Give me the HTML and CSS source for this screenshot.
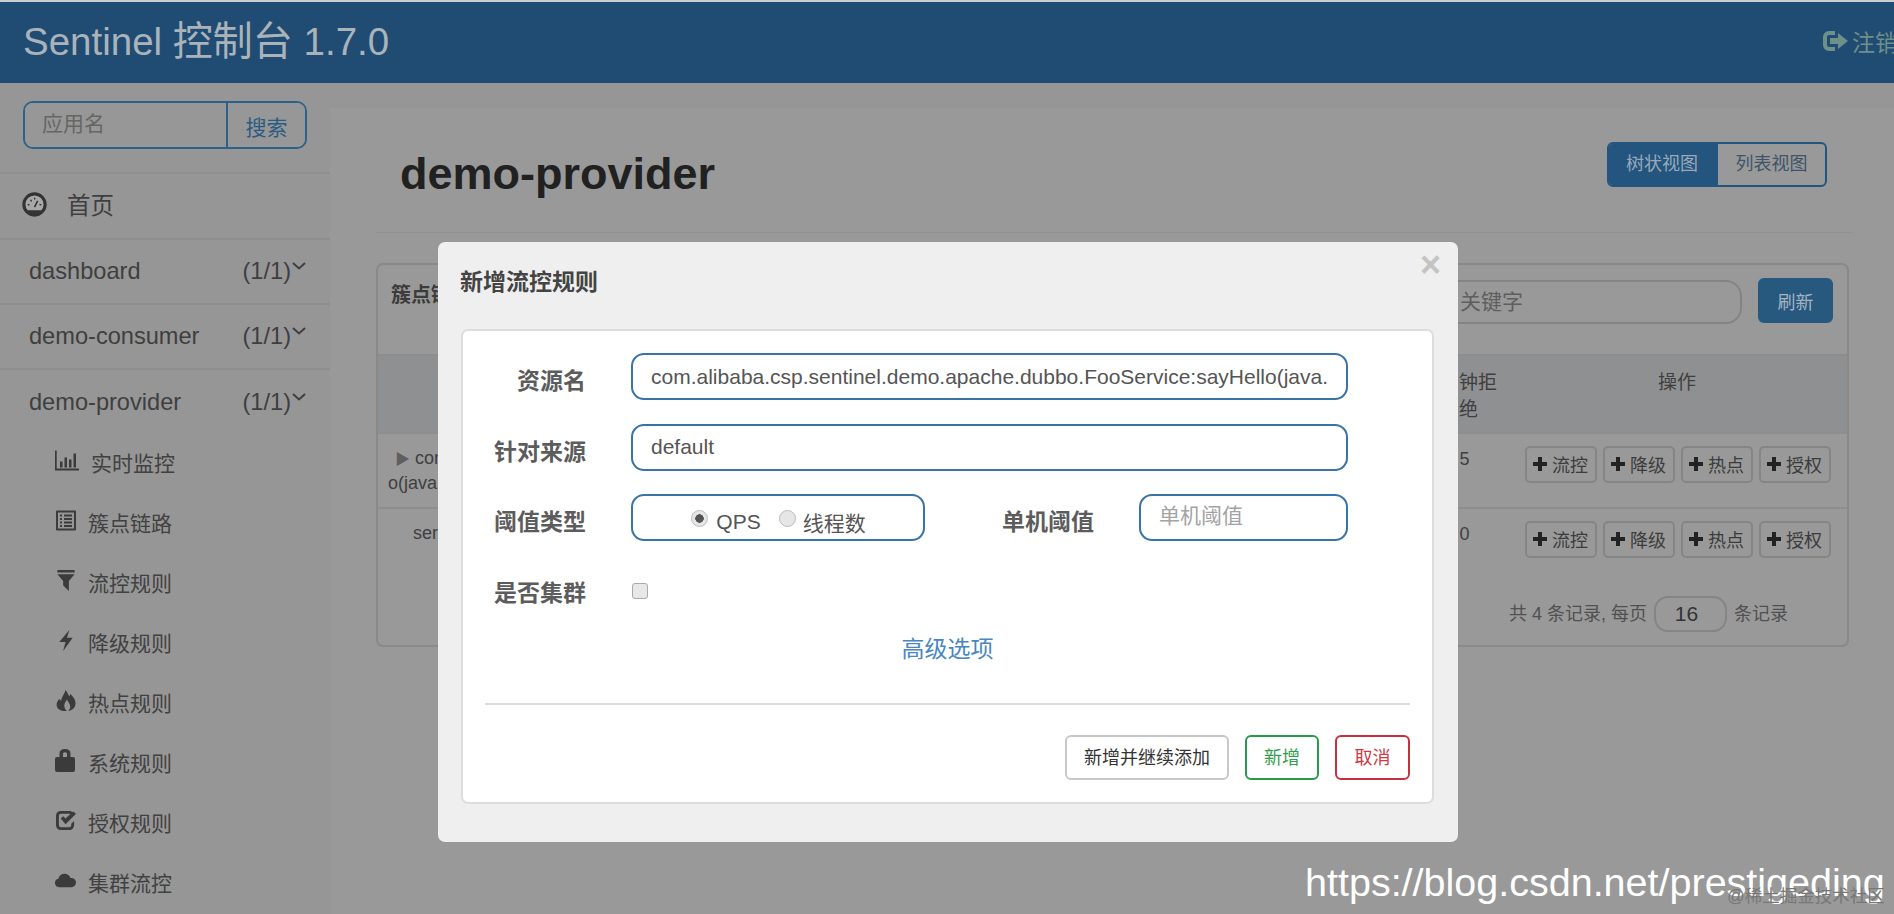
FILE: index.html
```html
<!DOCTYPE html>
<html lang="zh-CN">
<head>
<meta charset="utf-8">
<title>Sentinel 控制台 1.7.0</title>
<link rel="stylesheet" href="styles.css">
</head>
<body>
<svg class="defs" width="0" height="0" aria-hidden="true">
  <symbol id="i-plus" viewBox="0 0 14 14"><path d="M5 0h4v5h5v4H9v5H5V9H0V5h5z"/></symbol>
  <symbol id="i-chev" viewBox="0 0 14 8"><path d="M1 1l6 5.500L13 1" fill="none" stroke="currentColor" stroke-width="2"/></symbol>
</svg>
<header class="topbar">
  <div class="brand">Sentinel <span class="brand-cjk">控制台</span> 1.7.0</div>
  <div class="logout">
    <svg class="logout-icon" viewBox="0 0 25 20"><path d="M12 0H6a6 6 0 0 0-6 6v8a6 6 0 0 0 6 6h6v-4H6a2 2 0 0 1-2-2V6a2 2 0 0 1 2-2h6z"/><path d="M7 7h8V2l10 8-10 8v-5H7z"/></svg>
    <span>注销</span>
  </div>
</header>
<div class="layout">
  <aside class="sidebar">
    <div class="search-wrap">
      <div class="search">
        <input class="search-input" type="text" placeholder="应用名">
        <button class="search-btn" type="button">搜索</button>
      </div>
    </div>
    <div class="home">
      <svg class="home-icon" viewBox="0 0 24 24"><circle cx="12" cy="12" r="10.200" fill="#a8a8a8" stroke="#333" stroke-width="3"/><path d="M4.500 17.500h15a9.500 9.500 0 0 1-15 0z" fill="#333"/><path d="M12 14.500l3-6" stroke="#333" stroke-width="1.500"/><path d="M5.500 11.500h1.700v1.500H5.500zM8 7.500h1.500v1.500H8zM11.500 5.500h1.300v1.700h-1.300zM16.800 11.500h1.700v1.500h-1.700z" fill="#333"/></svg>
      <span>首页</span>
    </div>
    <div class="app"><span>dashboard</span><span class="count">(1/1)<svg class="chev"><use href="#i-chev"/></svg></span></div>
    <div class="app"><span>demo-consumer</span><span class="count">(1/1)<svg class="chev"><use href="#i-chev"/></svg></span></div>
    <div class="app open"><span>demo-provider</span><span class="count">(1/1)<svg class="chev"><use href="#i-chev"/></svg></span></div>
    <nav class="menu">
      <a class="menu-item first">
        <svg class="mi wide" viewBox="0 0 24 20"><path d="M0 0h1.700v18H24v2H0z"/><path d="M5 11h2.500v6H5zM9.500 7H12v10H9.500zM14 9h2.500v8H14zM18.500 3H21v14h-2.500z"/></svg>
        <span>实时监控</span>
      </a>
      <a class="menu-item">
        <svg class="mi" viewBox="0 0 20 20"><path fill-rule="evenodd" d="M1 0h18a1 1 0 0 1 1 1v18a1 1 0 0 1-1 1H1a1 1 0 0 1-1-1V1a1 1 0 0 1 1-1zm1 2v16h16V2z"/><path d="M4 4h2v2H4zM8 4h8v2H8zM4 7.500h2v2H4zM8 7.500h8v2H8zM4 11h2v2H4zM8 11h8v2H8zM4 14.500h2v2H4zM8 14.500h8v2H8z"/></svg>
        <span>簇点链路</span>
      </a>
      <a class="menu-item">
        <svg class="mi" viewBox="0 0 20 22"><path d="M1 0h18v2.500H1zM1 4.500h18l-6 7v10.500l-3-3-3-3v-4.500z"/></svg>
        <span>流控规则</span>
      </a>
      <a class="menu-item">
        <svg class="mi" viewBox="0 0 20 22"><path d="M13.500 0L11 8h6L7 22l2.500-9.500H3z"/></svg>
        <span>降级规则</span>
      </a>
      <a class="menu-item">
        <svg class="mi" viewBox="0 0 20 22"><path fill-rule="evenodd" d="M9.500 0c2.500 2.500 2 4.500 4 6.500.7-.8.8-1.500.8-2.500 3.400 3 5.700 6.500 5.700 10 0 4.500-3.500 8-8 8 2-1.500 3-3.500 2-6.500-.6-2-2-3.200-3-5.500-1.500 2.500-2.800 4-2.800 6.500 0 2.400 1.300 4 2.800 5.500C5.500 22 2.500 21 1 18.500-.8 15.300.5 12 3 9.500c1 1.200 1.500 1.500 2 2C5 7.500 8.500 4.500 9.500 0z"/></svg>
        <span>热点规则</span>
      </a>
      <a class="menu-item">
        <svg class="mi lock" viewBox="0 0 20 23"><path fill-rule="evenodd" d="M4.500 8V4.500C4.500 1.500 6.500 0 10 0s5.500 1.500 5.500 4.500V8H18a2 2 0 0 1 2 2v11a2 2 0 0 1-2 2H2a2 2 0 0 1-2-2V10a2 2 0 0 1 2-2zm3.500 0h4V5c0-1-.7-1.700-2-1.700S8 4 8 5z"/></svg>
        <span>系统规则</span>
      </a>
      <a class="menu-item">
        <svg class="mi" viewBox="0 0 21 20"><path d="M14 0H5a5 5 0 0 0-5 5v10a5 5 0 0 0 5 5h9a5 5 0 0 0 5-5v-4.500l-3 3V15a2 2 0 0 1-2 2H5a2 2 0 0 1-2-2V5a2 2 0 0 1 2-2h9c.5 0 1 .2 1.400.5L17.500 1.300A5 5 0 0 0 14 0z"/><path d="M5 8l2.500-2.500L10 8l8-7.500L21 3 10 14z"/></svg>
        <span>授权规则</span>
      </a>
      <a class="menu-item">
        <svg class="mi wide" viewBox="0 0 22 14"><path d="M4.500 14a4.500 4.500 0 0 1-1-8.900C4.300 2 7 0 10 0c3 0 5.400 1.800 6.200 4.500A4.800 4.800 0 0 1 22 9.200 4.800 4.800 0 0 1 17.200 14z"/></svg>
        <span>集群流控</span>
      </a>
    </nav>
  </aside>

  <main class="content">
    <div class="page-head">
      <h1 class="page-title">demo-provider</h1>
      <div class="toggle">
        <span class="toggle-btn active">树状视图</span>
        <span class="toggle-btn">列表视图</span>
      </div>
    </div>
    <section class="panel">
      <div class="panel-head">
        <b class="panel-title">簇点链路</b>
        <input class="keyword" type="text" placeholder="关键字">
        <button class="refresh" type="button">刷新</button>
      </div>
      <div class="row thead">
        <div class="c-name">资源名</div>
        <div class="c-num">分钟拒绝</div>
        <div class="c-ops">操作</div>
      </div>
      <div class="row">
        <div class="c-name"><span class="tri">▶</span> com.alibaba.csp<br><span class="wrapline">o(java.lang.String)</span></div>
        <div class="c-num val">5</div>
        <div class="c-ops btns">
          <button class="op" type="button"><svg class="plus"><use href="#i-plus"/></svg>流控</button>
          <button class="op" type="button"><svg class="plus"><use href="#i-plus"/></svg>降级</button>
          <button class="op" type="button"><svg class="plus"><use href="#i-plus"/></svg>热点</button>
          <button class="op" type="button"><svg class="plus"><use href="#i-plus"/></svg>授权</button>
        </div>
      </div>
      <div class="row plain">
        <div class="c-name"><span class="svc">service</span></div>
        <div class="c-num val">0</div>
        <div class="c-ops btns">
          <button class="op" type="button"><svg class="plus"><use href="#i-plus"/></svg>流控</button>
          <button class="op" type="button"><svg class="plus"><use href="#i-plus"/></svg>降级</button>
          <button class="op" type="button"><svg class="plus"><use href="#i-plus"/></svg>热点</button>
          <button class="op" type="button"><svg class="plus"><use href="#i-plus"/></svg>授权</button>
        </div>
      </div>
      <div class="pager">
        <span>共 4 条记录, 每页</span>
        <input class="page-size" type="text" value="16">
        <span>条记录</span>
      </div>
    </section>
  </main>
</div>

<div class="modal">
  <div class="modal-head">
    <h4 class="modal-title">新增流控规则</h4>
    <span class="close">×</span>
  </div>
  <div class="modal-panel">
    <div class="form-row">
      <label class="lbl">资源名</label>
      <input class="field full" type="text" value="com.alibaba.csp.sentinel.demo.apache.dubbo.FooService:sayHello(java.">
    </div>
    <div class="form-row">
      <label class="lbl">针对来源</label>
      <input class="field full" type="text" value="default">
    </div>
    <div class="form-row">
      <label class="lbl">阈值类型</label>
      <div class="field radios">
        <span class="radio on"></span><span class="r-text">QPS</span>
        <span class="radio second"></span><span class="r-text">线程数</span>
      </div>
      <label class="lbl lbl-mid">单机阈值</label>
      <input class="field small" type="text" placeholder="单机阈值">
    </div>
    <div class="form-row">
      <label class="lbl">是否集群</label>
      <span class="check"></span>
    </div>
    <div class="advanced">高级选项</div>
    <div class="divider"></div>
    <div class="actions">
      <button class="act wide-act" type="button">新增并继续添加</button>
      <button class="act green" type="button">新增</button>
      <button class="act red" type="button">取消</button>
    </div>
  </div>
</div>

<div class="wm-main">https://blog.csdn.net/prestigeding</div>
<div class="wm-sub">@稀土掘金技术社区</div>
</body>
</html>
```
FILE: styles.css
```css
* { box-sizing: border-box; }
html, body { height: 100%; }
body {
  margin: 0;
  width: 1894px;
  height: 914px;
  overflow: hidden;
  position: relative;
  background: #969696;
  color: #3f3f3f;
  font-family: "Liberation Sans", "Noto Sans CJK SC", sans-serif;
  font-size: 18px;
  display: flex;
  flex-direction: column;
}
button, input { font-family: inherit; outline: none; }
.defs { position: absolute; }

.topbar {
  height: 83px;
  flex: none;
  border-top: 2px solid #c9ced2;
  background: #204c74;
  display: flex;
  align-items: center;
  justify-content: space-between;
  padding-left: 23px;
}
.brand { font-size: 38.500px; color: #abb3ba; margin-top: -9px; }
.brand-cjk { font-size: 40px; }
.logout {
  display: flex;
  align-items: center;
  gap: 4px;
  width: 71px;
  flex: none;
  white-space: nowrap;
  color: #6d9088;
  font-size: 23px;
  margin-top: -3px;
}
.logout-icon { width: 25px; height: 20px; fill: currentColor; flex: none; }

.layout { flex: 1; display: flex; min-height: 0; }

.sidebar { width: 330px; flex: none; }
.search-wrap { height: 89px; padding: 18px 23px 0 23px; }
.search {
  display: flex;
  height: 48px;
  width: 284px;
  border: 2px solid #2c6289;
  border-radius: 10px;
  overflow: hidden;
}
.search-input {
  width: 203px;
  flex: none;
  border: 0;
  border-right: 2px solid #2c6289;
  background: #979797;
  padding: 0 0 2px 17px;
  font-size: 21px;
}
.search-input::placeholder { color: #666; opacity: 1; }
.search-btn {
  flex: 1;
  border: 0;
  background: #979797;
  color: #2b5b84;
  font-size: 21px;
  padding: 2px 0 0;
}
.home {
  height: 66px;
  border-top: 2px solid #8e8e8e;
  display: flex;
  align-items: center;
  padding: 0 0 4px 22px;
  font-size: 23.500px;
  gap: 20px;
  color: #3f3f3f;
}
.home-icon { width: 25px; height: 25px; flex: none; }
.app {
  height: 65px;
  border-top: 2px solid #8e8e8e;
  display: flex;
  align-items: center;
  justify-content: space-between;
  padding: 0 24px 0 29px;
  font-size: 23.600px;
}
.app.open { padding-top: 2px; }
.count { display: flex; align-items: flex-start; }
.chev { width: 14px; height: 8px; margin: 4px 0 0 1px; color: #3f3f3f; }
.menu { display: flex; flex-direction: column; margin-top: -1px; }
.menu-item {
  height: 60px;
  display: flex;
  align-items: center;
  padding-left: 55px;
  font-size: 21px;
  color: #414141;
}
.menu-item span { margin-left: 12px; }
.mi { width: 20px; height: 21px; fill: #3b3b3b; flex: none; margin-left: 1px; margin-top: -3px; }
.mi.wide { width: 24px; margin-left: 0; }
.menu-item:not(.first) .mi.wide { width: 21px; }
.mi.lock { height: 23px; width: 20px; margin-left: 0; }
.menu-item:has(.lock) span { margin-left: 13px; }

.content {
  flex: 1;
  min-width: 0;
  margin-top: 25px;
  background: #999;
  padding: 0 41px 0 46px;
}
.page-head {
  height: 125px;
  border-bottom: 1px solid #919191;
  display: flex;
  align-items: flex-start;
  justify-content: space-between;
  padding: 34px 26px 0 24px;
}
.page-title {
  margin: 6px 0 0;
  font-size: 45px;
  line-height: 52px;
  color: #212121;
  font-weight: bold;
}
.toggle {
  display: flex;
  height: 45px;
  border: 2px solid #24557f;
  border-radius: 6px;
  overflow: hidden;
}
.toggle-btn {
  font-size: 18px;
  line-height: 40px;
  width: 107px;
  text-align: center;
  color: #3f5468;
}
.toggle-btn.active { width: 109px; padding-right: 3px; background: #24557f; color: #97a9ba; }

.panel {
  margin: 30px 4px 0 0;
  height: 384px;
  border: 2px solid #898989;
  border-radius: 7px;
}
.panel-head {
  height: 91px;
  border-bottom: 2px solid #8d8d8d;
  display: flex;
  align-items: flex-start;
  padding: 13px 14px 0 13px;
}
.panel-title { font-size: 20px; line-height: 34px; color: #3c3c3c; }
.keyword {
  margin-left: auto;
  width: 420px;
  height: 44px;
  margin-top: 2px;
  border: 2px solid #848484;
  border-radius: 16px;
  background: #999;
  font-size: 21px;
  padding: 0 0 0 136px;
}
.keyword::placeholder { color: #5e5e5e; opacity: 1; }
.refresh {
  margin-left: 16px;
  width: 75px;
  height: 45px;
  border: 0;
  border-radius: 6px;
  background: #27597f;
  color: #a4b3c2;
  font-size: 18px;
}

.row { display: flex; height: 75px; border-bottom: 2px solid #8e8e8e; }
.row.plain { border-bottom: 0; }
.thead {
  height: 78px;
  background: #8f9091;
  font-size: 19px;
  line-height: 27px;
  padding-top: 13px;
}
.thead .c-name { text-align: center; }
.c-name { width: 1052px; flex: none; overflow: hidden; white-space: nowrap; }
.c-num { width: 77px; flex: none; padding: 0 10px; text-align: center; }
.c-num.val { padding-right: 18px; padding-top: 2px; }
.c-ops { flex: 1; text-align: center; }
.row:not(.thead) { font-size: 18px; line-height: 25px; padding-top: 11px; }
.row:not(.thead) .c-name { padding: 1px 0 0 10px; }
.tri { color: #5f5f5f; font-size: 15px; padding-left: 7px; }
.svc { padding-left: 25px; }
.btns {
  display: flex;
  justify-content: center;
  gap: 6px;
  padding: 1px 0 0 1px;
}
.op {
  width: 72px;
  height: 37px;
  display: flex;
  align-items: center;
  justify-content: center;
  gap: 5px;
  padding: 0 0 2px;
  border: 2px solid #858585;
  border-radius: 5px;
  background: #999;
  color: #3c3c3c;
  font-size: 18px;
}
.plus { width: 14px; height: 14px; fill: #222; flex: none; }
.pager {
  display: flex;
  justify-content: flex-end;
  align-items: center;
  gap: 7px;
  padding: 12px 59px 0 0;
  color: #505050;
  font-size: 18px;
}
.pager span { margin-top: -5px; }
.page-size {
  width: 73px;
  height: 36px;
  border: 2px solid #858585;
  border-radius: 14px;
  background: #999;
  color: #333;
  font-size: 21px;
  text-align: center;
  padding: 0 8px 0 0;
}

.modal {
  position: absolute;
  left: 438px;
  top: 242px;
  width: 1020px;
  height: 600px;
  background: #efefef;
  border-radius: 7px;
  padding: 0 24px 0 23px;
}
.modal-head { height: 87px; position: relative; display: flex; align-items: flex-start; }
.modal-title {
  margin: 26px 0 0 -1px;
  font-size: 23px;
  line-height: 28px;
  font-weight: bold;
  color: #444;
}
.close {
  position: absolute;
  right: -7px;
  top: 3px;
  font-size: 36px;
  line-height: 40px;
  font-weight: bold;
  color: #c4c4c4;
}
.modal-panel {
  height: 475px;
  background: #fff;
  border: 2px solid #ddd;
  border-radius: 7px;
  padding: 22px 0 0;
}
.form-row { display: flex; align-items: center; height: 47px; margin-bottom: 23.500px; }
.lbl {
  width: 123px;
  flex: none;
  text-align: right;
  font-size: 23px;
  line-height: 30px;
  font-weight: bold;
  color: #5c5c5c;
  padding-top: 9px;
  margin-right: 45px;
}
.lbl-mid { width: 169px; margin-right: 45px; }
.field {
  height: 47px;
  border: 2px solid #3874a6;
  border-radius: 13px;
  background: #fff;
  color: #555;
  font-size: 21px;
  padding: 0 18px;
}
.field::placeholder { color: #a3a3a3; opacity: 1; font-size: 21px; }
.full { width: 717px; }
.small { width: 209px; padding-bottom: 3px; }
.radios {
  width: 294px;
  display: flex;
  align-items: center;
  justify-content: center;
  color: #555;
  font-size: 21px;
  padding: 0;
}
.radio {
  width: 17px;
  height: 17px;
  border-radius: 50%;
  border: 1px solid #bbb;
  background: #e6e6e6;
  flex: none;
  margin-right: 8px;
  position: relative;
  top: 1px;
}
.radio.on { margin-left: 1px; background: radial-gradient(circle, #555 0 4px, #e6e6e6 4.500px); }
.radio.second { margin-left: 18px; margin-right: 7px; }
.r-text { position: relative; top: 4px; }
.check {
  width: 16px;
  height: 16px;
  margin-left: 1px;
  border: 1px solid #aaa;
  border-radius: 3px;
  background: #e8e8e8;
  flex: none;
  position: relative;
  top: 3px;
}
.advanced {
  text-align: center;
  font-size: 23px;
  line-height: 30px;
  color: #4a86bf;
  margin-top: -1px;
}
.divider { height: 2px; margin: 39px 22px 0; background: #ddd; }
.actions {
  display: flex;
  justify-content: flex-end;
  gap: 16px;
  padding: 30px 22px 0 0;
}
.act {
  height: 45px;
  width: 75px;
  border: 2px solid #c8c8c8;
  border-radius: 6px;
  background: #fff;
  color: #333;
  font-size: 18px;
  padding: 0 0 4px;
}
.wide-act { width: 164px; }
.green { width: 74px; border-color: #279a4c; color: #2f9e50; }
.red { border-color: #c9303f; color: #cc3a48; }

.wm-main {
  position: absolute;
  left: 1305px;
  top: 859px;
  font-size: 39.500px;
  line-height: 46px;
  color: #fff;
  white-space: nowrap;
}
.wm-sub {
  position: absolute;
  left: 1727px;
  top: 884px;
  font-size: 17.500px;
  line-height: 24px;
  color: #777;
  white-space: nowrap;
}
```
